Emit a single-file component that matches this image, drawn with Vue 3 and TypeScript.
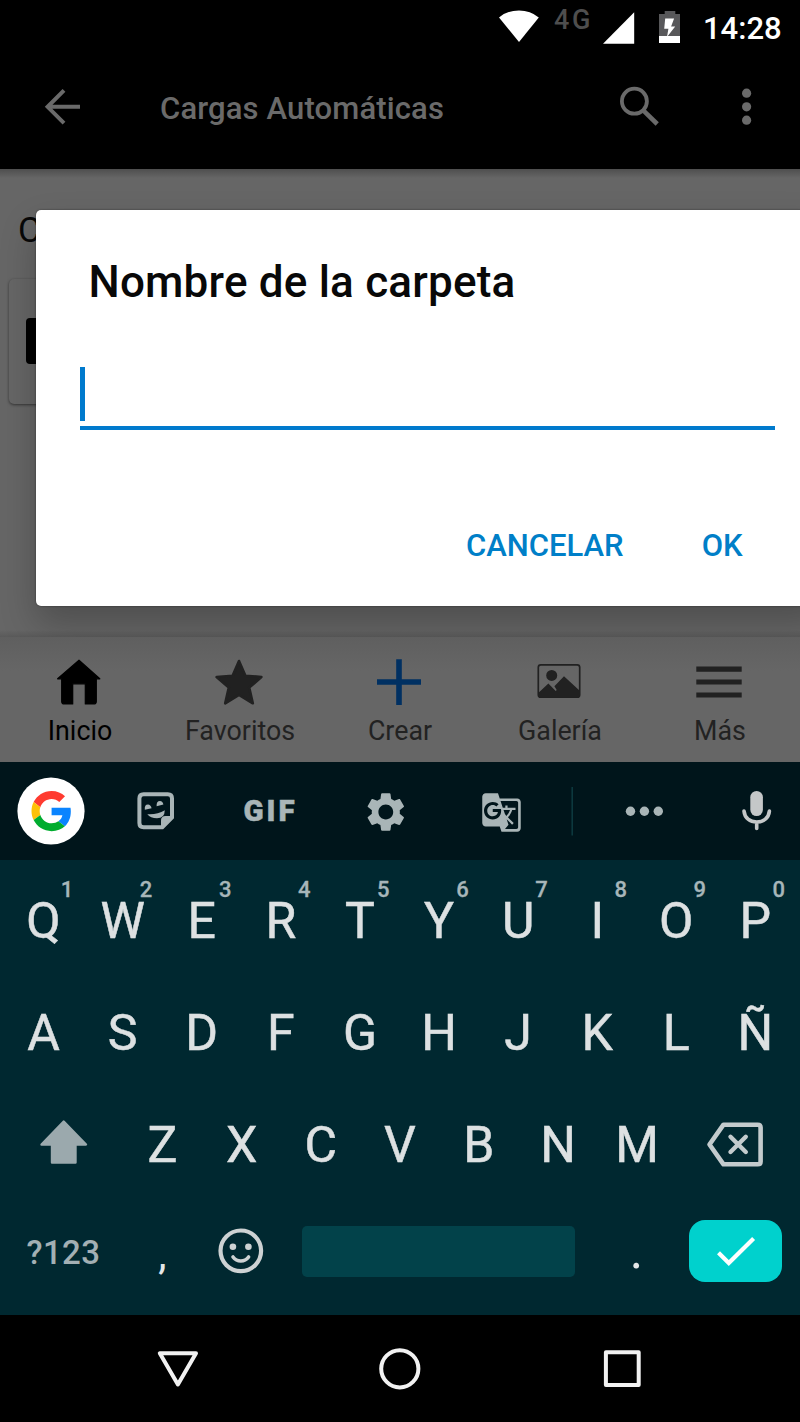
<script setup lang="ts">
interface Key {
  label: string
  hint?: string
}

const topRow: Key[] = 'QWERTYUIOP'.split('').map((label, i) => ({ label, hint: String((i + 1) % 10) }))
const middleRow: Key[] = 'ASDFGHJKLÑ'.split('').map((label) => ({ label }))
const bottomRow: Key[] = 'ZXCVBNM'.split('').map((label) => ({ label }))
</script>

<template>
  <div class="screen">
    <header class="status">
      <svg width="60" height="54" viewBox="490 0 60 54"><path d="M499 17.4Q507.5 10.4 519 10.4T538.8 17.4L519 42Z" fill="#fff" /></svg>
      <span class="network">4G</span>
      <svg width="98" height="54" viewBox="598 0 98 54">
        <path d="M603 43.8H634.2V12.3Z" fill="#fff" />
        <path d="M659 14h5.7v-3h10.6v3h4.7v22H659Z" fill="#58585a" />
        <path d="M659 36h21v7H659ZM665.2 18.6h8.9l-3 8H675.2L667 37l1.4-8.2H664.2Z" fill="#fff" />
      </svg>
      <span class="clock">14:28</span>
    </header>

    <div class="appbar">
      <svg width="160" height="115" viewBox="0 54 160 115">
        <path d="M80 106.8H47M64 90.3L47.6 106.8L64 123.2" fill="none" stroke="#6a6a6a" stroke-width="4" />
      </svg>
      <h1 class="title">Cargas Automáticas</h1>
      <svg width="200" height="115" viewBox="600 54 200 115">
        <circle cx="634.4" cy="101.2" r="12.5" fill="none" stroke="#6a6a6a" stroke-width="3.8" />
        <path d="M644 111.2L657.2 124" stroke="#6a6a6a" stroke-width="4.6" />
        <g fill="#6a6a6a">
          <circle cx="746.6" cy="93.2" r="4.6" /><circle cx="746.6" cy="106.8" r="4.6" /><circle cx="746.6" cy="120.2" r="4.6" />
        </g>
      </svg>
    </div>

    <main class="content">
      <p class="section">C</p>
      <div class="card"><div class="thumb"></div></div>
      <section class="dialog">
        <h2 class="dialog-title">Nombre de la carpeta</h2>
        <div class="field"><div class="caret"></div></div>
        <div class="actions"><span class="cancel">CANCELAR</span><span class="ok">OK</span></div>
      </section>
    </main>

    <nav class="tabs">
      <div class="tab active">
        <svg width="160" height="76" viewBox="0 637 160 76">
          <path d="M79 660.2L99.8 678.8H96.3V701.5Q96.3 704 93.8 704H85.3V683.8H72.7V704H64.2Q61.7 704 61.7 701.5V678.8H57.6Z" fill="#000" stroke="#000" stroke-width="1.2" stroke-linejoin="round" />
        </svg>
        <span>Inicio</span>
      </div>
      <div class="tab">
        <svg width="160" height="76" viewBox="160 637 160 76">
          <path d="M239 661L245.4 675.7L261.4 677L249.2 687.6L252.8 703.3L239 695L225.2 703.3L228.8 687.6L216.6 677L232.6 675.7Z" fill="#212121" stroke="#212121" stroke-width="2.6" stroke-linejoin="round" />
        </svg>
        <span>Favoritos</span>
      </div>
      <div class="tab">
        <svg width="160" height="76" viewBox="320 637 160 76">
          <path d="M377 682H421M399 659.3V705" stroke="#003062" stroke-width="5.6" />
        </svg>
        <span>Crear</span>
      </div>
      <div class="tab">
        <svg width="160" height="76" viewBox="480 637 160 76">
          <rect x="538.3" y="664.8" width="41.4" height="32.4" rx="2.5" fill="none" stroke="#212121" stroke-width="1.7" />
          <circle cx="551.7" cy="675.4" r="5.5" fill="#212121" />
          <path d="M538.5 692.8L548.4 683.5L555.7 691L556.7 690L554.4 686.2L564 676.3L580 691V695.5Q580 697.5 578 697.5H540.5Q538.5 697.5 538.5 695.5Z" fill="#212121" />
        </svg>
        <span>Galería</span>
      </div>
      <div class="tab">
        <svg width="160" height="76" viewBox="640 637 160 76">
          <path d="M696.3 669.2H741.7M696.3 682H741.7M696.3 695H741.7" stroke="#212121" stroke-width="5.2" />
        </svg>
        <span>Más</span>
      </div>
    </nav>

    <section class="keyboard">
      <div class="tools">
        <svg width="103" height="98" viewBox="0 762 103 98">
          <circle cx="51" cy="811" r="33.6" fill="#fff" />
          <g transform="translate(31.5 791) scale(.837)">
            <path fill="#ff3b30" d="M24 9.5c3.54 0 6.71 1.22 9.21 3.6l6.85-6.85C35.9 2.38 30.47 0 24 0 14.62 0 6.51 5.38 2.56 13.22l7.98 6.19C12.43 13.72 17.74 9.5 24 9.5z" />
            <path fill="#0a84ff" d="M46.98 24.55c0-1.57-.15-3.09-.38-4.55H24v9.02h12.94c-.58 2.96-2.26 5.48-4.78 7.18l7.73 6c4.51-4.18 7.09-10.36 7.09-17.65z" />
            <path fill="#ffc107" d="M10.53 28.59c-.48-1.45-.76-2.99-.76-4.59s.27-3.14.76-4.59l-7.98-6.19C.92 16.46 0 20.12 0 24c0 3.88.92 7.54 2.56 10.78l7.97-6.19z" />
            <path fill="#00ac2f" d="M24 48c6.48 0 11.93-2.13 15.89-5.81l-7.73-6c-2.15 1.45-4.92 2.3-8.16 2.3-6.26 0-11.57-4.22-13.47-9.91l-7.98 6.19C6.51 42.62 14.62 48 24 48z" />
          </g>
        </svg>
        <svg width="105" height="98" viewBox="103 762 105 98">
          <path d="M143.6 794.3H167.8Q172 794.3 172 798.5V817.5L162.3 827.3H143.6Q139.4 827.3 139.4 823.1V798.5Q139.4 794.3 143.6 794.3Z" fill="none" stroke="#a9b5b7" stroke-width="4" />
          <path d="M161 828.5V820.5Q161 816 165.5 816H173.5V818L163 828.5Z" fill="#a9b5b7" />
          <path d="M147.3 814.2Q157 815 164.8 810.2Q164.6 818.3 157 818.3Q150.5 818.3 147.3 814.2Z" fill="#a9b5b7" />
          <path d="M144.8 809.8Q144.3 804.6 148 804.6Q150.6 804.6 151.6 808.2ZM156.6 806.2Q156.3 801 160 801Q162.7 801 163.4 804.6Z" fill="#a9b5b7" />
        </svg>
        <span class="gif">GIF</span>
        <svg width="112" height="98" viewBox="330 762 112 98">
          <path transform="translate(362.4 788.6) scale(1.95)" fill="#a9b5b7" d="M19.14 12.94c.04-.3.06-.61.06-.94 0-.32-.02-.64-.07-.94l2.03-1.58c.18-.14.23-.41.12-.61l-1.92-3.32c-.12-.22-.37-.29-.59-.22l-2.39.96c-.5-.38-1.03-.7-1.62-.94l-.36-2.54c-.04-.24-.24-.41-.48-.41h-3.84c-.24 0-.43.17-.47.41l-.36 2.54c-.59.24-1.13.57-1.62.94l-2.39-.96c-.22-.08-.47 0-.59.22L2.74 8.87c-.12.21-.08.47.12.61l2.03 1.58c-.05.3-.09.63-.09.94s.02.64.07.94l-2.03 1.58c-.18.14-.23.41-.12.61l1.92 3.32c.12.22.37.29.59.22l2.39-.96c.5.38 1.03.7 1.62.94l.36 2.54c.05.24.24.41.48.41h3.84c.24 0 .44-.17.47-.41l.36-2.54c.59-.24 1.13-.56 1.62-.94l2.39.96c.22.08.47 0 .59-.22l1.92-3.32c.12-.22.07-.47-.12-.61l-2.01-1.58zM12 15.8c-2.1 0-3.8-1.7-3.8-3.8s1.7-3.8 3.8-3.8 3.8 1.7 3.8 3.8-1.7 3.8-3.8 3.8z" />
        </svg>
        <svg width="118" height="98" viewBox="442 762 118 98">
          <path transform="translate(480.5 791.4) scale(1.75)" fill="#a9b5b7" d="M21 4H11l-1-3H3c-1.1 0-2 .9-2 2v15c0 1.1.9 2 2 2h8l1 3h9c1.1 0 2-.9 2-2V6c0-1.1-.9-2-2-2zM7 16c-2.76 0-5-2.24-5-5s2.24-5 5-5c1.35 0 2.48.5 3.35 1.3L9.03 8.57c-.38-.36-1.04-.78-2.03-.78-1.74 0-3.15 1.44-3.15 3.21S5.26 14.21 7 14.21c2.01 0 2.84-1.44 2.92-2.41H7v-1.71h4.68c.07.31.12.61.12 1.02C11.8 13.97 9.89 16 7 16zm6.17-5.42h3.7c-.43 1.25-1.11 2.43-2.05 3.47-.31-.35-.6-.72-.86-1.1l-.79-2.37zm8.33 9.92c0 .55-.45 1-1 1H14l2-2.5-1.04-3.1 3.1 3.1.92-.92-3.3-3.25.02-.02c1.13-1.25 1.93-2.69 2.4-4.22H20v-1.3h-4.53V8h-1.29v1.29h-1.44L11.46 5.5h9.04c.55 0 1 .45 1 1v14z" />
        </svg>
        <svg width="240" height="98" viewBox="560 762 240 98">
          <path d="M572.2 787V835.5" stroke="#0c383e" stroke-width="1.6" />
          <g fill="#a9b5b7">
            <circle cx="630.5" cy="811.2" r="4.7" /><circle cx="644.4" cy="811.2" r="4.7" /><circle cx="658.3" cy="811.2" r="4.7" />
          </g>
          <rect x="750.3" y="791" width="12.6" height="25" rx="6.3" fill="#c4c7c8" />
          <path d="M744 811C744.6 818 750 822 756.7 822S768.8 818 769.4 811M756.7 822V828.5" fill="none" stroke="#c4c7c8" stroke-width="3.6" stroke-linecap="round" />
        </svg>
      </div>

      <div class="row">
        <div v-for="k in topRow" :key="k.label" class="key">{{ k.label }}<span class="hint">{{ k.hint }}</span></div>
      </div>
      <div class="row">
        <div v-for="k in middleRow" :key="k.label" class="key">{{ k.label }}</div>
      </div>
      <div class="row third">
        <svg width="119" height="112" viewBox="4 1088 119 112">
          <path d="M63.7 1121.5L86 1144.5H75.5V1162.5H52V1144.5H41.5Z" fill="#9ba9ad" stroke="#9ba9ad" stroke-width="2.4" stroke-linejoin="round" />
        </svg>
        <div v-for="k in bottomRow" :key="k.label" class="key">{{ k.label }}</div>
        <svg width="119" height="112" viewBox="677 1088 119 112">
          <g fill="none" stroke="#c3cbcd" stroke-linejoin="round">
            <path d="M723.5 1124.7H757.7Q760.6 1124.7 760.6 1127.6V1161.4Q760.6 1164.3 757.7 1164.3H723.5L709.5 1144.5Z" stroke-width="4.6" />
            <path d="M730.5 1136.8L745.8 1152M745.8 1136.8L730.5 1152" stroke-width="4.4" stroke-linecap="round" />
          </g>
        </svg>
      </div>
      <div class="row fourth">
        <span class="symbols">?123</span>
        <span class="punct comma">,</span>
        <svg class="emoji" width="50" height="102" viewBox="216 1200 50 102">
          <circle cx="240.8" cy="1250.8" r="20.3" fill="none" stroke="#cdd2d3" stroke-width="4.2" />
          <circle cx="232.9" cy="1246.7" r="3.3" fill="#cdd2d3" /><circle cx="248.4" cy="1246.7" r="3.3" fill="#cdd2d3" />
          <path d="M233 1257Q236 1261 240.8 1261T248.6 1257" fill="none" stroke="#cdd2d3" stroke-width="3.6" stroke-linecap="round" />
        </svg>
        <div class="space"></div>
        <span class="punct dot">.</span>
        <div class="enter">
          <svg width="93" height="62" viewBox="689 1220 93 62">
            <path d="M718.5 1252.8L728.8 1263L753.6 1238.6" fill="none" stroke="#fff" stroke-width="4.2" />
          </svg>
        </div>
      </div>
    </section>

    <footer class="system">
      <svg width="800" height="107" viewBox="0 1315 800 107">
        <g fill="none" stroke="#f2f2f2" stroke-width="4" stroke-linejoin="round">
          <path d="M159.8 1353.2H196L177.9 1384.5Z" />
          <circle cx="399.8" cy="1368.8" r="18.6" />
          <rect x="605.9" y="1352.3" width="32.8" height="32.8" />
        </g>
      </svg>
    </footer>
  </div>
</template>

<style>
body {
  margin: 0;
}
</style>

<style scoped>
.screen {
  width: 800px;
  height: 1422px;
  display: flex;
  flex-direction: column;
  overflow: hidden;
  background: #000;
  font-family: Roboto, "Noto Sans", sans-serif;
}
svg {
  display: block;
  flex: none;
}
h1, h2, p {
  margin: 0;
}
.status {
  height: 54px;
  display: flex;
  padding-left: 490px;
}
.network {
  width: 44px;
  padding-left: 4px;
  font-size: 27px;
  font-weight: 500;
  line-height: 40px;
  letter-spacing: 2.6px;
  color: #4e4e4e;
}
.clock {
  padding-left: 7px;
  font-size: 31px;
  font-weight: 500;
  line-height: 57px;
  color: #fff;
}
.appbar {
  height: 115px;
  display: flex;
}
.title {
  width: 440px;
  font-size: 31px;
  font-weight: 500;
  line-height: 109px;
  letter-spacing: 0.14px;
  color: #6a6a6a;
}
.content {
  position: relative;
  height: 468px;
  background: linear-gradient(#4e4e4e, #666 9px, #666 461px, #5a5a5a);
}
.section {
  padding: 38px 0 0 18px;
  font-size: 35px;
  line-height: 48px;
  color: #080808;
}
.card {
  width: 200px;
  height: 125px;
  margin: 24px 0 0 9px;
  padding: 39px 0 0 17px;
  box-sizing: border-box;
  border-radius: 5px;
  background: #666;
  box-shadow: 0 1px 3px rgba(0, 0, 0, 0.5);
}
.thumb {
  width: 60px;
  height: 46px;
  border-radius: 4px;
  background: #000;
}
.dialog {
  position: absolute;
  left: 35.5px;
  top: 40.5px;
  width: 790px;
  height: 396px;
  border-radius: 5px;
  background: #fff;
  box-shadow: 0 0 2px rgba(0, 0, 0, 0.5), 0 18px 36px rgba(0, 0, 0, 0.24);
}
.dialog-title {
  padding: 42px 0 0 53px;
  font-size: 44px;
  font-weight: 500;
  line-height: 60px;
  letter-spacing: 0.2px;
  color: #080808;
}
.field {
  width: 695px;
  height: 59px;
  margin: 55.5px 0 0 44.5px;
  border-bottom: 4.5px solid #007acd;
}
.caret {
  width: 4.5px;
  height: 54px;
  background: #007acd;
}
.actions {
  display: flex;
  gap: 78px;
  padding: 93px 0 0 430.5px;
  font-size: 31px;
  font-weight: 500;
  line-height: 45px;
  color: #007fc8;
}
.tabs {
  position: relative;
  height: 125px;
  display: grid;
  grid-template-columns: repeat(5, 160px);
  background: linear-gradient(#5f5f5f, #666 34px);
}
.tab {
  font-size: 26.8px;
  line-height: 36px;
  text-align: center;
  color: #222;
}
.active {
  color: #000;
}
.keyboard {
  height: 553px;
  background: #002830;
}
.tools {
  height: 98px;
  display: flex;
  margin-bottom: 4px;
  background: #00151b;
}
.gif {
  width: 122px;
  box-sizing: border-box;
  padding-left: 3px;
  font-size: 29.5px;
  font-weight: 900;
  line-height: 98px;
  letter-spacing: 3px;
  text-align: center;
  color: #a9b5b7;
  -webkit-text-stroke: 0.5px #a9b5b7;
}
.row {
  height: 112px;
  display: flex;
  padding-left: 4px;
}
.key {
  position: relative;
  width: 79.1px;
  flex: none;
  font-size: 50px;
  line-height: 114px;
  text-align: center;
  color: #dde1e2;
  -webkit-text-stroke: 0.5px #dde1e2;
}
.hint {
  position: absolute;
  left: 50px;
  top: 13px;
  width: 26px;
  font-size: 22px;
  font-weight: 500;
  line-height: 26px;
  color: #a7b6b9;
  -webkit-text-stroke: 0.3px #a7b6b9;
}
.fourth {
  height: 102px;
  align-items: center;
  padding-left: 26.5px;
}
.symbols {
  width: 109.5px;
  font-size: 33px;
  font-weight: 500;
  line-height: 104px;
  letter-spacing: 0.4px;
  padding-top: 3px;
  color: #a3b0b4;
}
.punct {
  width: 53px;
  font-size: 51px;
  line-height: 102px;
  text-align: center;
  color: #e4e7e8;
}
.comma {
  margin-top: 7px;
  font-size: 42px;
}
.emoji {
  margin-left: 27px;
}
.space {
  width: 273.5px;
  height: 51px;
  margin-left: 35.5px;
  border-radius: 5px;
  background: #02424a;
}
.dot {
  margin-left: 35px;
}
.enter {
  width: 93px;
  height: 62px;
  margin-left: 26px;
  border-radius: 16px;
  background: #00d1cd;
}
.system {
  height: 107px;
}
</style>
